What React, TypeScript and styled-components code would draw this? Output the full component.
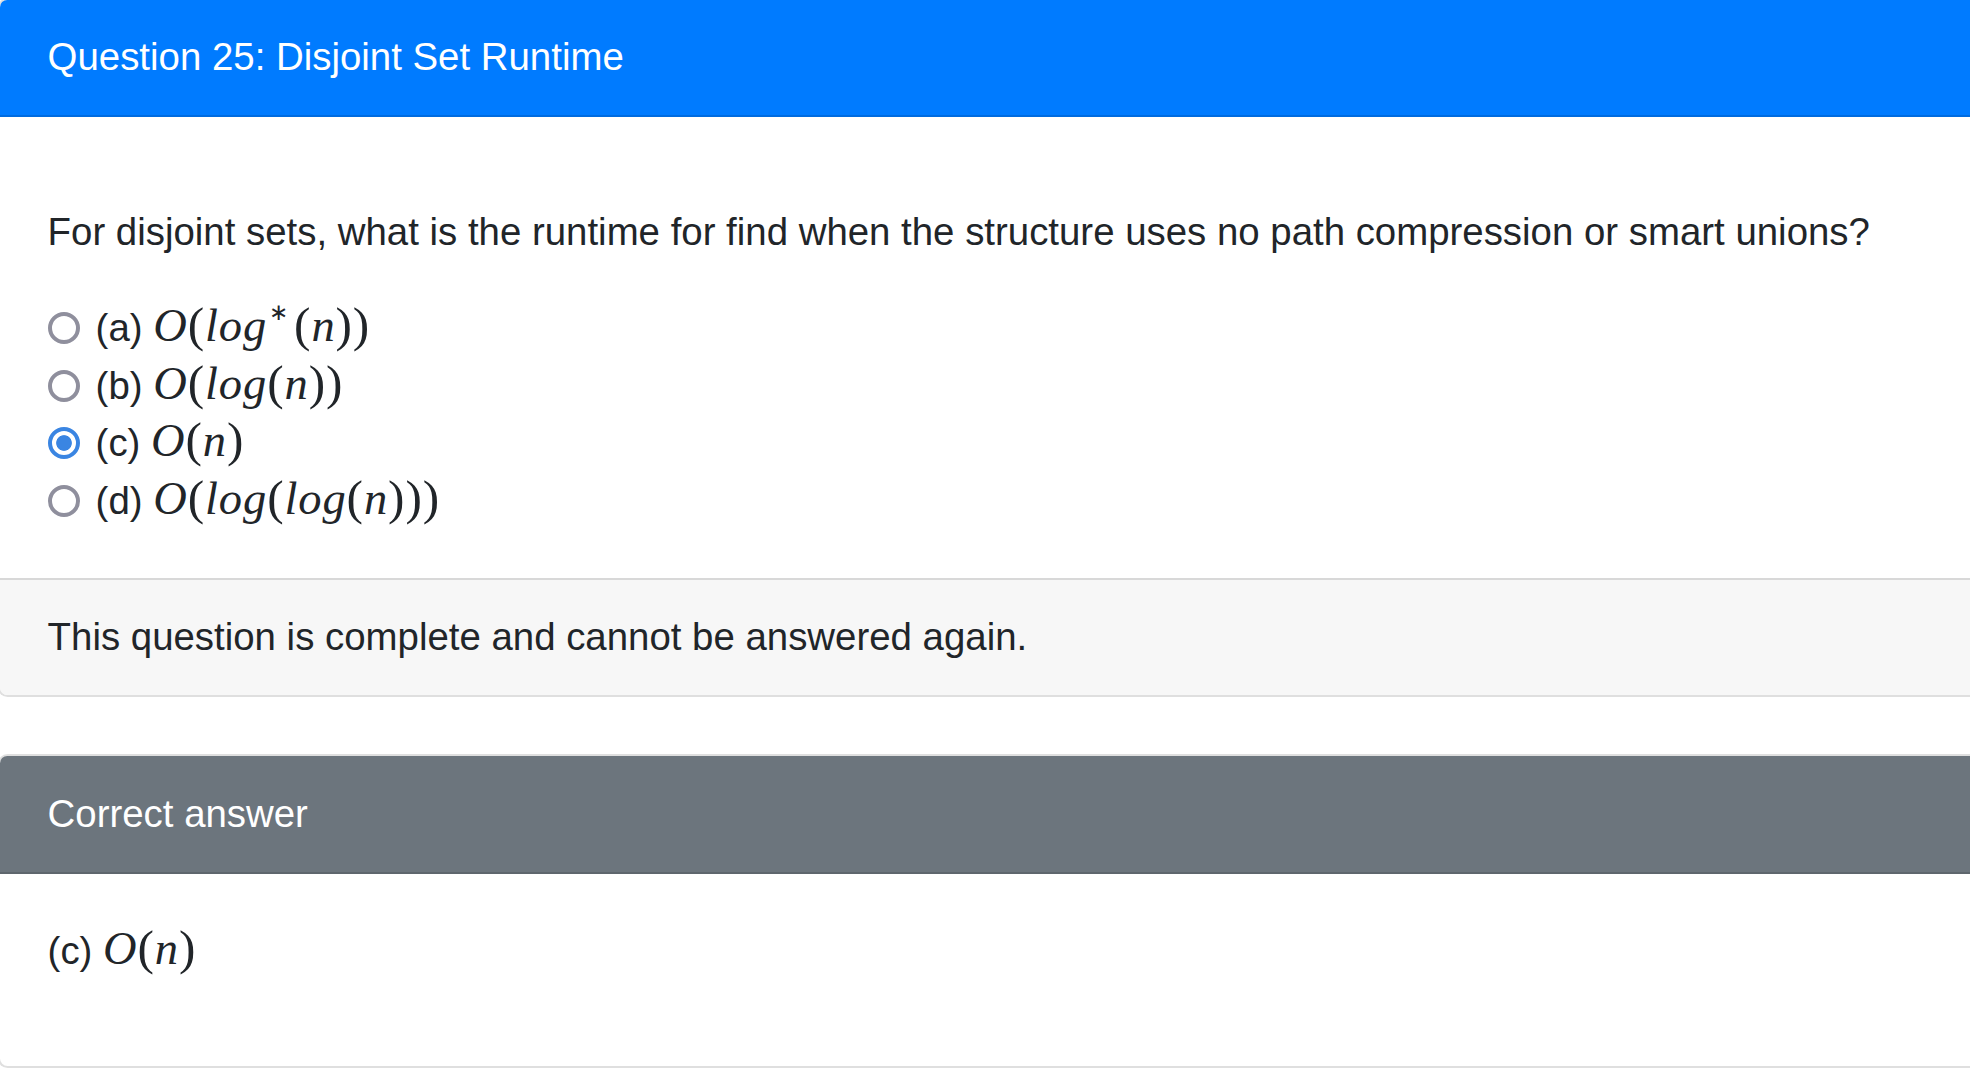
import React from "react";
import styled, { createGlobalStyle } from "styled-components";

const GlobalStyle = createGlobalStyle`
  html, body {
    margin: 0;
    padding: 0;
    background: #ffffff;
    overflow: hidden;
  }
  body {
    font-family: "Liberation Sans", Arial, Helvetica, sans-serif;
    font-size: 38.4px;
    line-height: 1.5;
    color: #212529;
  }
`;

const Page = styled.div`
  width: calc(100% + 30px);
  margin: -2.4px 0 0 -2.4px;
`;

const Card = styled.section`
  display: flex;
  flex-direction: column;
  background: #ffffff;
  border: 2.4px solid rgba(0, 0, 0, 0.125);
  border-radius: 9.6px;
  & + & {
    margin-top: 57.6px;
  }
`;

const CardHeader = styled.header<{ $variant: "primary" | "secondary" }>`
  padding: 28.8px 48px;
  height: 57.6px;
  background: ${(p) => (p.$variant === "primary" ? "#007bff" : "#6c757d")};
  color: #ffffff;
  border-bottom: 2.4px solid rgba(0, 0, 0, 0.125);
  border-radius: 7.2px 7.2px 0 0;
`;

const CardBody = styled.div`
  padding: 48px;
`;

const CardFooter = styled.footer`
  padding: 28.8px 48px;
  background: #f7f7f7;
  border-top: 2.4px solid rgba(0, 0, 0, 0.125);
  border-radius: 0 0 7.2px 7.2px;
`;

const QuestionText = styled.p`
  margin: 38.4px 0 38.4px;
`;

const AnswerText = styled.p`
  margin: 0 0 38.4px;
`;

const OptionList = styled.div`
  display: flex;
  flex-direction: column;
`;

const OptionRow = styled.label`
  display: flex;
  align-items: center;
  height: 57.6px;
  gap: 16px;
`;

const Radio = styled.span<{ $checked?: boolean }>`
  flex: none;
  box-sizing: border-box;
  width: 32px;
  height: 32px;
  border-radius: 50%;
  border: ${(p) => (p.$checked ? "4.6px solid #3a85e2" : "4.2px solid #8f8f9d")};
  background: ${(p) =>
    p.$checked
      ? "radial-gradient(circle, #3a85e2 0 7.4px, #ffffff 8.2px)"
      : "#ffffff"};
`;

const OptionLabel = styled.span`
  line-height: 57.6px;
  white-space: nowrap;
`;

const MathSpan = styled.span`
  font-family: "Liberation Serif", "Times New Roman", serif;
  font-size: 46.5px;
  line-height: 0;
  letter-spacing: 0.9px;
`;

const MVar = styled.span`
  font-style: italic;
`;

const MParen = styled.span`
  font-style: normal;
  font-size: 1.06em;
`;

const MSup = styled.sup`
  font-style: normal;
  font-size: 0.5em;
  line-height: 0;
  vertical-align: 0.9em;
  margin: 0 5px 0 2px;
`;

type Token = { t: "v" | "p" | "s"; c: string };

const tokens = (s: string): Token[] => {
  const out: Token[] = [];
  for (const ch of s) {
    if (ch === "(" || ch === ")") out.push({ t: "p", c: ch });
    else if (ch === "*") out.push({ t: "s", c: "∗" });
    else out.push({ t: "v", c: ch });
  }
  return out;
};

const Math: React.FC<{ expr: string }> = ({ expr }) => (
  <MathSpan>
    {tokens(expr).map((tk, i) =>
      tk.t === "p" ? (
        <MParen key={i}>{tk.c}</MParen>
      ) : tk.t === "s" ? (
        <MSup key={i}>{tk.c}</MSup>
      ) : (
        <MVar key={i}>{tk.c}</MVar>
      )
    )}
  </MathSpan>
);

const options = [
  { key: "a", expr: "O(log*(n))", checked: false },
  { key: "b", expr: "O(log(n))", checked: false },
  { key: "c", expr: "O(n)", checked: true },
  { key: "d", expr: "O(log(log(n)))", checked: false },
];

export default function App() {
  return (
    <>
      <GlobalStyle />
      <Page>
        <Card>
          <CardHeader $variant="primary">Question 25: Disjoint Set Runtime</CardHeader>
          <CardBody>
            <QuestionText>
              For disjoint sets, what is the runtime for find when the structure uses no path
              compression or smart unions?
            </QuestionText>
            <OptionList>
              {options.map((o) => (
                <OptionRow key={o.key}>
                  <Radio $checked={o.checked} />
                  <OptionLabel>
                    ({o.key}) <Math expr={o.expr} />
                  </OptionLabel>
                </OptionRow>
              ))}
            </OptionList>
          </CardBody>
          <CardFooter>This question is complete and cannot be answered again.</CardFooter>
        </Card>
        <Card>
          <CardHeader $variant="secondary">Correct answer</CardHeader>
          <CardBody>
            <AnswerText>
              (c) <Math expr="O(n)" />
            </AnswerText>
          </CardBody>
        </Card>
      </Page>
    </>
  );
}
